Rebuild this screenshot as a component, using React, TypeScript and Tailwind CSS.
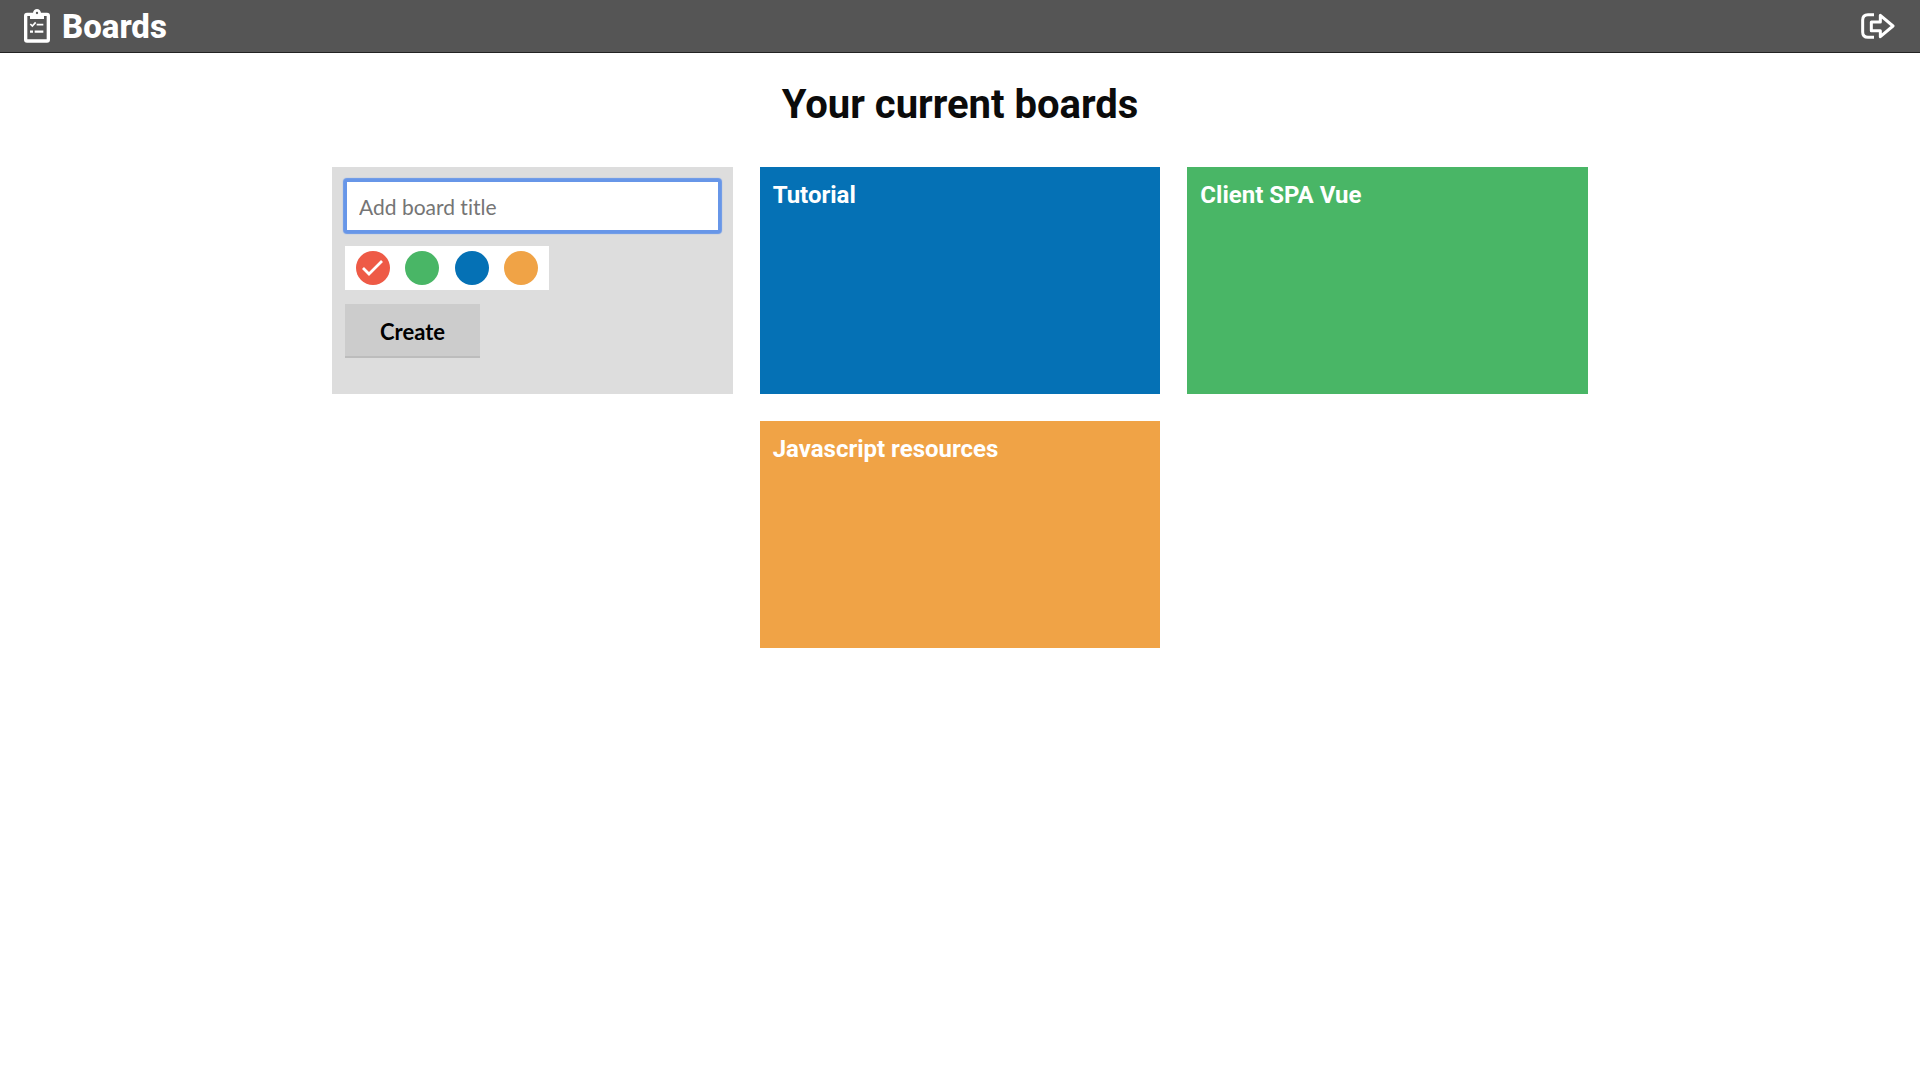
import { useState } from 'react';

const swatches = [
  { name: 'Red', className: 'bg-[#ee5a46]' },
  { name: 'Green', className: 'bg-[#49b666]' },
  { name: 'Blue', className: 'bg-[#0571b5]' },
  { name: 'Orange', className: 'bg-[#f0a346]' },
];

const boards = [
  { title: 'Tutorial', className: 'bg-[#0571b5]' },
  { title: 'Client SPA Vue', className: 'bg-[#49b666]' },
  { title: 'Javascript resources', className: 'bg-[#f0a346] col-start-2' },
];

function ClipboardIcon() {
  return (
    <svg viewBox="0 0 78 102" className="h-[34px] w-[26px]" fill="none" stroke="currentColor" aria-hidden="true">
      <rect x="5" y="16" width="68" height="80" rx="4" strokeWidth="10" />
      <path d="M18 12h9c1-8 6-12 12-12s11 4 12 12h9v18H18z" fill="currentColor" stroke="none" />
      <circle cx="39" cy="12" r="3.5" fill="#555555" stroke="none" />
      <path d="M19 45l6 6 10-11M38 47h20" strokeWidth="5" />
      <path d="M18 68h9M32 68h26" strokeWidth="7" />
    </svg>
  );
}

function LogoutIcon() {
  return (
    <svg viewBox="0 0 102 78" className="h-[26px] w-[34px]" fill="none" stroke="currentColor" strokeWidth="9" strokeLinejoin="round" aria-hidden="true">
      <path d="M39 5H21Q5 5 5 21v36q0 16 16 16h18" />
      <path d="M31 27h27V7l38 32-38 32V53H31z" />
    </svg>
  );
}

function ColorPicker() {
  const [selected, setSelected] = useState('Red');
  return (
    <div role="radiogroup" aria-label="Board color" className="mt-[14px] flex h-11 w-51 items-center justify-between bg-white px-[11px]">
      {swatches.map(({ name, className }) => (
        <label key={name} className="relative block size-[34px] cursor-pointer">
          <input
            type="radio"
            name="color"
            value={name}
            aria-label={name}
            checked={selected === name}
            onChange={() => setSelected(name)}
            className={`block size-full cursor-pointer appearance-none rounded-full ${className}`}
          />
          {selected === name && (
            <svg viewBox="0 0 34 34" className="pointer-events-none absolute inset-0" fill="none" stroke="white" strokeWidth="2.8" aria-hidden="true">
              <path d="M7 17l6 6L26 10" />
            </svg>
          )}
        </label>
      ))}
    </div>
  );
}

function NewBoardForm() {
  return (
    <form className="bg-[#dddddd] p-[13px] font-[Lato,sans-serif]" onSubmit={(e) => e.preventDefault()}>
      <input
        type="text"
        aria-label="Board title"
        placeholder="Add board title"
        className="block h-[52px] w-full rounded-xs border-2 border-[#6796e8] bg-white px-3 text-[21px] text-black shadow-[0_0_1px_2px_#6796e8] outline-none [font-variant-ligatures:none] placeholder:text-[#757575]"
      />
      <ColorPicker />
      <button type="submit" className="mt-[14px] block h-[54px] w-[135px] border-b-2 border-[#bcbcbc] bg-[#cccccc] pt-[2px] text-[22px] font-bold text-black">
        Create
      </button>
    </form>
  );
}

export default function App() {
  return (
    <div className="min-h-screen bg-white font-[Roboto,sans-serif]">
      <header className="flex h-[53px] items-center justify-between border-b border-[#222222] bg-[#555555] pr-[25px] pl-6 text-white">
        <a href="#boards" className="flex items-center gap-3 text-[33px] leading-none font-extrabold">
          <ClipboardIcon />
          Boards
        </a>
        <button type="button" aria-label="Log out">
          <LogoutIcon />
        </button>
      </header>
      <main className="mx-auto max-w-[1256px]">
        <h1 className="pt-[27px] text-center text-[40px] leading-[50px] font-bold text-[#0b0b0b]">Your current boards</h1>
        <div className="mt-[37px] grid auto-rows-[227px] grid-cols-3 gap-[27px]">
          <NewBoardForm />
          {boards.map(({ title, className }) => (
            <a key={title} href="#board" className={`block p-[13px] text-2xl leading-[30px] font-bold text-white ${className}`}>
              {title}
            </a>
          ))}
        </div>
      </main>
    </div>
  );
}
